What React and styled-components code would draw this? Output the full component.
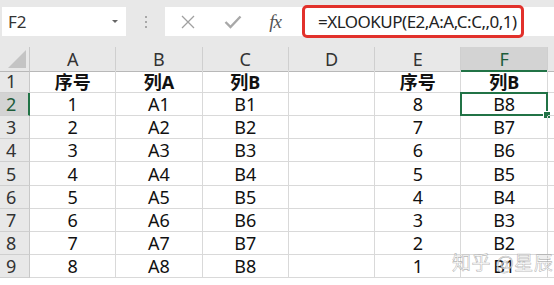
import React from 'react'
import styled, { createGlobalStyle } from 'styled-components'

const Global = createGlobalStyle`
  html, body { margin: 0; padding: 0; background: #ffffff; overflow: hidden; }
  body { font-family: "Noto Sans", "Noto Sans CJK SC", sans-serif; }
`

const COLS = ['A', 'B', 'C', 'D', 'E', 'F']
const COL_W = 86.3
const ROW_H = 23.1
const HEAD_W = 30

const rows = [
  ['序号', '列A', '列B', '', '序号', '列B'],
  ['1', 'A1', 'B1', '', '8', 'B8'],
  ['2', 'A2', 'B2', '', '7', 'B7'],
  ['3', 'A3', 'B3', '', '6', 'B6'],
  ['4', 'A4', 'B4', '', '5', 'B5'],
  ['5', 'A5', 'B5', '', '4', 'B4'],
  ['6', 'A6', 'B6', '', '3', 'B3'],
  ['7', 'A7', 'B7', '', '2', 'B2'],
  ['8', 'A8', 'B8', '', '1', 'B1'],
]

const Page = styled.div`
  width: 554px;
  height: 285px;
  position: relative;
  overflow: hidden;
  background: #fff;
`
const Toolbar = styled.div`
  height: 47px;
  background: #e8e8e8;
  display: flex;
  align-items: flex-start;
  padding-top: 7px;
  box-sizing: border-box;
`
const NameBox = styled.div`
  width: 124px;
  height: 29px;
  margin-left: 2px;
  background: #fff;
  display: flex;
  align-items: center;
  justify-content: space-between;
  padding: 0 8px 0 6px;
  box-sizing: border-box;
  font-size: 17px;
  color: #333;
`
const Caret = styled.span`
  width: 0;
  height: 0;
  border-left: 3px solid transparent;
  border-right: 3px solid transparent;
  border-top: 3px solid #666;
`
const Dots = styled.div`
  width: 39px;
  height: 29px;
  display: flex;
  flex-direction: column;
  align-items: center;
  justify-content: center;
  gap: 3px;
`
const Dot = styled.span`
  width: 2px;
  height: 2px;
  background: #a8a8a8;
`
const FormulaBar = styled.div`
  flex: 1;
  height: 29px;
  background: #fff;
  display: flex;
  align-items: center;
  position: relative;
`
const IconSlot = styled.div`
  width: ${p => p.w}px;
  display: flex;
  align-items: center;
  justify-content: center;
`
const Fx = styled.span`
  font-family: "Liberation Serif", serif;
  font-style: italic;
  font-size: 19px;
  color: #555;
  letter-spacing: -1px;
`
const FormulaBox = styled.div`
  position: absolute;
  left: 137px;
  top: -2px;
  width: 222px;
  height: 33px;
  border: 3px solid #e2312b;
  border-radius: 5px;
  box-sizing: border-box;
  display: flex;
  align-items: center;
  padding-left: 13px;
  font-size: 17px;
  color: #222;
  letter-spacing: -0.5px;
  white-space: nowrap;
`
const Grid = styled.div`
  display: grid;
  grid-template-columns: ${HEAD_W}px repeat(6, ${COL_W}px) 40px;
  grid-auto-rows: ${ROW_H}px;
`
const ColHeadRow = styled.div`
  display: contents;
`
const Corner = styled.div`
  height: 25px;
  background: #e8e8e8;
  border-right: 1px solid #c8c8c8;
  border-bottom: 1px solid #b8b8b8;
  box-sizing: border-box;
  position: relative;
  overflow: hidden;
  &::after {
    content: '';
    position: absolute;
    right: 3px;
    bottom: 3px;
    border-left: 18px solid transparent;
    border-bottom: 18px solid #c4c4c4;
  }
`
const ColHead = styled.div`
  height: 25px;
  background: ${p => (p.active ? '#d3d3d3' : '#e8e8e8')};
  border-right: 1px solid #cfcfcf;
  border-bottom: ${p => (p.active ? '2px solid #217346' : '1px solid #b8b8b8')};
  box-sizing: border-box;
  display: flex;
  align-items: center;
  justify-content: center;
  font-size: 18px;
  color: ${p => (p.active ? '#1e5c3a' : '#333')};
`
const RowHead = styled.div`
  background: ${p => (p.active ? '#d3d3d3' : '#e8e8e8')};
  border-right: ${p => (p.active ? '2px solid #217346' : '1px solid #c8c8c8')};
  border-bottom: 1px solid #cfcfcf;
  box-sizing: border-box;
  display: flex;
  align-items: center;
  padding-left: 6px;
  font-size: 18px;
  color: ${p => (p.active ? '#1e5c3a' : '#333')};
`
const Cell = styled.div`
  border-right: 1px solid #d9d9d9;
  border-bottom: 1px solid #d9d9d9;
  box-sizing: border-box;
  display: flex;
  align-items: center;
  justify-content: center;
  font-size: 18px;
  font-weight: ${p => (p.bold ? 700 : 400)};
  color: #111;
  position: relative;
`
const Selection = styled.div`
  position: absolute;
  left: -1px;
  top: -1px;
  right: -1px;
  bottom: -1px;
  border: 2px solid #217346;
  &::after {
    content: '';
    position: absolute;
    right: -5px;
    bottom: -5px;
    width: 6px;
    height: 6px;
    background: #217346;
    border: 1px solid #fff;
  }
`
const Watermark = styled.div`
  position: absolute;
  left: 452px;
  top: 248px;
  font-family: "Noto Sans CJK SC", sans-serif;
  font-size: 19px;
  color: rgba(255, 255, 255, 0.75);
  -webkit-text-stroke: 0.6px rgba(120, 120, 120, 0.55);
  letter-spacing: 0.5px;
  white-space: nowrap;
`

const App = () => {
  return (
    <Page>
      <Global />
      <Toolbar>
        <NameBox>
          F2
          <Caret />
        </NameBox>
        <Dots>
          <Dot />
          <Dot />
          <Dot />
        </Dots>
        <FormulaBar>
          <IconSlot w={46}>
            <svg width="16" height="16" viewBox="0 0 16 16">
              <path d="M2 2 L14 14 M14 2 L2 14" stroke="#a0a0a0" strokeWidth="1.3" fill="none" />
            </svg>
          </IconSlot>
          <IconSlot w={44}>
            <svg width="18" height="14" viewBox="0 0 18 14">
              <path d="M1.5 7 L6.5 12 L16.5 1.5" stroke="#a8a8a8" strokeWidth="2.4" fill="none" />
            </svg>
          </IconSlot>
          <IconSlot w={40}>
            <Fx>fx</Fx>
          </IconSlot>
          <FormulaBox>=XLOOKUP(E2,A:A,C:C,,0,1)</FormulaBox>
        </FormulaBar>
      </Toolbar>
      <Grid>
        <ColHeadRow>
          <Corner />
          {COLS.map(c => (
            <ColHead key={c} active={c === 'F'}>{c}</ColHead>
          ))}
          <ColHead />
        </ColHeadRow>
        {rows.map((r, i) => (
          <React.Fragment key={i}>
            <RowHead active={i === 1}>{i + 1}</RowHead>
            {r.map((v, j) => (
              <Cell key={j} bold={i === 0}>
                {v}
                {i === 1 && j === 5 && <Selection />}
              </Cell>
            ))}
            <Cell />
          </React.Fragment>
        ))}
      </Grid>
      <Watermark>知乎 @星辰</Watermark>
    </Page>
  )
}

export default App
